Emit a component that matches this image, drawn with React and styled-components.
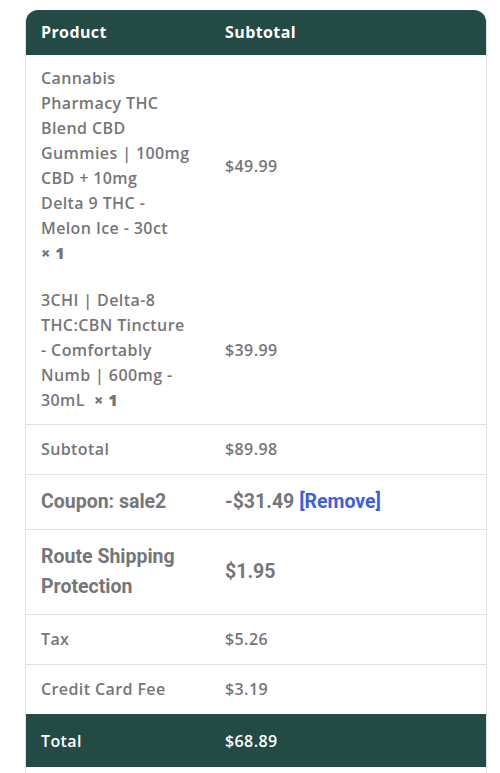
import React from 'react';
import styled, { createGlobalStyle } from 'styled-components';

const GlobalStyle = createGlobalStyle`
  body {
    margin: 0;
    background: #fff;
    font-family: 'Open Sans', 'Noto Sans', sans-serif;
  }
`;

const green = '#234a44';
const text = '#76767a';
const line = '#e2e2e2';

const Page = styled.div`
  padding: 10px 13px 0 25px;
`;

const Table = styled.table`
  width: 100%;
  border-collapse: separate;
  border-spacing: 0;
  border-left: 1px solid ${line};
  border-right: 1px solid ${line};
  border-radius: 12px 12px 0 0;
  color: ${text};
  font-size: 16px;
  font-weight: 600;
  line-height: 25px;
  letter-spacing: 0.4px;
`;

const Head = styled.th`
  background: ${green};
  color: #fff;
  text-align: left;
  font-weight: 700;
  padding: 10px 15px;
  width: ${(p) => (p.$first ? '154px' : 'auto')};
  &:first-child {
    border-top-left-radius: 12px;
  }
  &:last-child {
    border-top-right-radius: 12px;
  }
`;

const Cell = styled.td`
  padding: ${(p) => (p.$item ? '11px 15px' : '12px 15px')};
  vertical-align: middle;
  white-space: ${(p) => (p.$item ? 'nowrap' : 'normal')};
  border-top: ${(p) => (p.$ruled ? `1px solid ${line}` : 'none')};
  font-family: ${(p) => (p.$roboto ? "'Roboto', sans-serif" : 'inherit')};
  font-size: ${(p) => (p.$roboto ? '19.5px' : '16px')};
  font-weight: ${(p) => (p.$roboto ? 700 : 600)};
  line-height: ${(p) => (p.$roboto ? '30px' : '25px')};
  letter-spacing: ${(p) => (p.$roboto ? '0' : '0.4px')};
`;

const NameLine = styled.span`
  display: block;
`;

const TotalRow = styled.tr`
  background: ${green};
  color: #fff;

  td {
    padding: 15px 15px 13px;
  }
`;

const Qty = styled.strong`
  font-weight: 800;
`;

const RemoveLink = styled.a`
  color: #3d5fdc;
  text-decoration: none;
`;

const Spacer = styled.td`
  height: 8px;
  padding: 0;
`;

// product names broken where the shop's narrow column wraps them
const items = [
  {
    lines: ['Cannabis', 'Pharmacy THC', 'Blend CBD', 'Gummies | 100mg', 'CBD + 10mg', 'Delta 9 THC -', 'Melon Ice - 30ct', ''],
    price: '$49.99',
  },
  {
    lines: ['3CHI | Delta-8', 'THC:CBN Tincture', '- Comfortably', 'Numb | 600mg -', '30mL\u00a0 '],
    price: '$39.99',
  },
];

const fees = [
  { label: 'Tax', value: '$5.26' },
  { label: 'Credit Card Fee', value: '$3.19' },
];

export default function App() {
  return (
    <Page>
      <GlobalStyle />
      <Table>
        <thead>
          <tr>
            <Head $first>Product</Head>
            <Head>Subtotal</Head>
          </tr>
        </thead>
        <tbody>
          {items.map((item) => (
            <tr key={item.price}>
              <Cell $item>
                {item.lines.map((l, i) =>
                  i === item.lines.length - 1 ? (
                    <NameLine key={i}>
                      {l}
                      <Qty>× 1</Qty>
                    </NameLine>
                  ) : (
                    <NameLine key={i}>{l}</NameLine>
                  )
                )}
              </Cell>
              <Cell $item>{item.price}</Cell>
            </tr>
          ))}
        </tbody>
        <tfoot>
          <tr>
            <Cell $ruled>Subtotal</Cell>
            <Cell $ruled>$89.98</Cell>
          </tr>
          <tr>
            <Cell $ruled $roboto>Coupon: sale2</Cell>
            <Cell $ruled $roboto>
              -$31.49 <RemoveLink href="#">[Remove]</RemoveLink>
            </Cell>
          </tr>
          <tr>
            <Cell $ruled $roboto>Route Shipping Protection</Cell>
            <Cell $ruled $roboto>$1.95</Cell>
          </tr>
          {fees.map((fee) => (
            <tr key={fee.label}>
              <Cell $ruled>{fee.label}</Cell>
              <Cell $ruled>{fee.value}</Cell>
            </tr>
          ))}
          <TotalRow>
            <Cell>Total</Cell>
            <Cell>$68.89</Cell>
          </TotalRow>
          <tr>
            <Spacer colSpan={2} />
          </tr>
        </tfoot>
      </Table>
    </Page>
  );
}
